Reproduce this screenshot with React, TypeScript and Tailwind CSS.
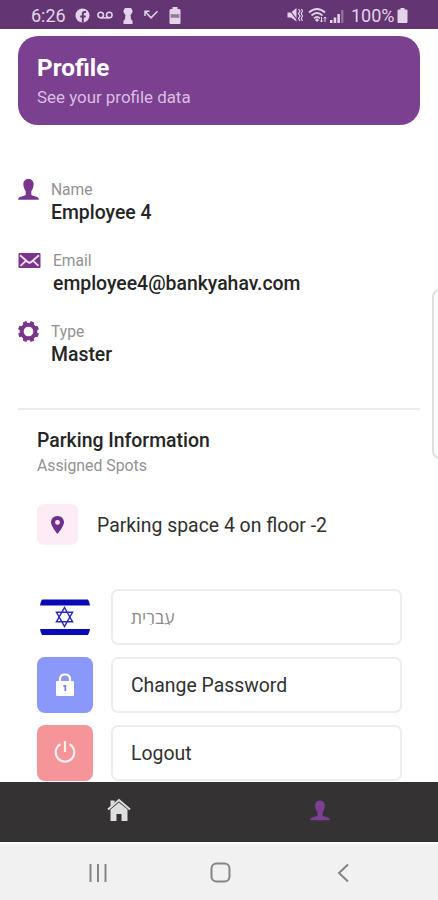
import type { ReactNode } from "react";

interface IconProps {
  className?: string;
}

function PersonIcon({ className }: IconProps) {
  return (
    <svg viewBox="0 0 20 20" className={className} fill="currentColor">
      <path d="M10 0C7 0 5.100 1.900 5.100 5C5.100 7.500 6.200 10 7.300 11.600V15C6.200 16.600 0.800 16.300 0.200 18.800V19.800H19.800V18.800C19.200 16.300 13.800 16.600 12.700 15V11.600C13.800 10 14.900 7.500 14.900 5C14.900 1.900 13 0 10 0Z" />
    </svg>
  );
}

function MailIcon({ className }: IconProps) {
  return (
    <svg viewBox="0 0 22 15" className={className}>
      <rect width="22" height="15" rx="1" fill="currentColor" />
      <path d="M1.500 2.300L9.300 9Q11 10.400 12.700 9L20.500 2.300M2 12.800L7.600 7.600M20 12.800L14.400 7.600" fill="none" stroke="#f3dff5" strokeWidth="1.800" />
    </svg>
  );
}

function GearIcon({ className }: IconProps) {
  return (
    <svg viewBox="0 0 20 20" className={className}>
      <circle cx="10" cy="10" r="6.500" fill="none" stroke="currentColor" strokeWidth="3.800" />
      {[22.5, 67.5, 112.5, 157.5, 202.5, 247.5, 292.5, 337.5].map((angle) => (
        <path key={angle} d="M7.700 3L8.300 0H11.700L12.300 3Z" fill="currentColor" transform={`rotate(${angle} 10 10)`} />
      ))}
    </svg>
  );
}

function StatusBar() {
  return (
    <div className="flex h-[29px] items-center bg-[#633573] pl-[31px] text-[#e3d3e8]">
      <span className="w-[44px] pt-[3px] text-[18px] leading-none">6:26</span>
      <svg className="mt-[2px] h-[15px] w-[15px]" viewBox="0 0 15 15">
        <circle cx="7.500" cy="7.500" r="7" fill="currentColor" />
        <path d="M7.800 14.500V6.200Q7.800 4 9.900 4H11M5.200 8.500H10.700" fill="none" stroke="#633573" strokeWidth="1.900" />
      </svg>
      <svg className="mt-px ml-[7px] h-[9px] w-4" viewBox="0 0 16 9" fill="none" stroke="currentColor" strokeWidth="1.500">
        <circle cx="3.700" cy="4" r="2.800" />
        <circle cx="12.300" cy="4" r="2.800" />
        <path d="M3.700 6.900H12.300" />
      </svg>
      <svg className="mt-[2px] ml-[10px] h-4 w-[10px]" viewBox="0 0 10 16" fill="currentColor">
        <path d="M2 0H8L9.500 2.500V4L8 6.500L7.500 7L8 11L9.500 13V16H0.500V13L2 11L2.500 7L2 6.500L0.500 4V2.500Z" />
      </svg>
      <svg className="mt-px ml-[11px] h-[10px] w-[15px]" viewBox="0 0 15 10" fill="none" stroke="currentColor" strokeWidth="1.500">
        <path d="M1 6V1.200H5.500M1.200 1.500L7 7.800L13.500 1.200" />
      </svg>
      <svg className="mt-[2px] ml-[10px] h-[17px] w-3" viewBox="0 0 12 17">
        <path d="M3.500 0H8.500V2H10.500L11.500 3V16Q11.500 17 10.500 17H1.500Q0.500 17 0.500 16V3L1.500 2H3.500Z" fill="currentColor" />
        <path d="M1.500 9H10.500" stroke="#a68ab0" strokeWidth="4" />
        <path d="M2.500 9H9.500" stroke="#8d6a99" strokeWidth="2" strokeDasharray="1.500 1" />
      </svg>
      <svg className="mt-px ml-[106px] h-4 w-4" viewBox="0 0 16 16">
        <path d="M0.500 5.500H4L9.500 1V14.500L4 10.500H0.500Z" fill="currentColor" />
        <path d="M1 1L11 14" stroke="#633573" strokeWidth="1.200" />
        <path d="M11.500 2L13 4L11.500 6.500L13 9L11.500 11.500L13 14M14.500 2L15.500 4L14.300 6.500L15.500 9L14.300 11.500L15.500 14" fill="none" stroke="currentColor" strokeWidth="1.200" />
      </svg>
      <svg className="mt-px ml-[5px] h-[15px] w-[19px]" viewBox="0 0 19 15" fill="none" stroke="currentColor" strokeWidth="1.700">
        <path d="M1 4.500Q9 -2.500 17 4.500M3.500 7.500Q9 2.500 14.500 7.500M6 10.300Q9 7.500 12 10.300" />
        <path d="M9 10L11 12L9 14L7 12Z" fill="currentColor" stroke="none" />
        <path d="M13.500 9V14M12 12.500L13.500 14L15 12.500M17 14V9M15.700 10.500L17 9L18.500 10.500" strokeWidth="1" />
      </svg>
      <svg className="mt-[2px] ml-[3px] h-[14px] w-[14px]" viewBox="0 0 14 14" fill="currentColor">
        <path d="M0 11H2.500V14H0ZM3.700 8.500H6.200V14H3.700ZM7.400 5H9.900V14H7.400Z" />
        <path d="M11 1H13.500V14H11Z" opacity="0.350" />
      </svg>
      <span className="ml-[7px] w-[45px] pt-[3px] text-[18px] leading-none whitespace-nowrap">100%</span>
      <svg className="mt-[2px] ml-px h-[15px] w-[11px]" viewBox="0 0 11 15" fill="currentColor">
        <path d="M3.500 0H7.500V1.500H9.500Q10.500 1.500 10.500 2.500V14Q10.500 15 9.500 15H1.500Q0.500 15 0.500 14V2.500Q0.500 1.500 1.500 1.500H3.500Z" />
      </svg>
    </div>
  );
}

interface FieldProps {
  icon: ReactNode;
  label: string;
  value: string;
}

function Field({ icon, label, value }: FieldProps) {
  return (
    <div className="flex h-[71px] text-[#79358c]">
      {icon}
      <div className="ml-[12px] pt-[2px]">
        <div className="text-[15.6px] leading-[20px] text-[#929292]">{label}</div>
        <div className="mt-px text-[19.4px] leading-[24px] font-medium text-[#252525]">{value}</div>
      </div>
    </div>
  );
}

interface ActionProps {
  icon: ReactNode;
  children: ReactNode;
}

function Action({ icon, children }: ActionProps) {
  return (
    <div className="flex h-14">
      {icon}
      <button className="ml-[18px] flex w-[291px] items-center rounded-[7px] border-2 border-[#ededed] pt-[2px] pl-[18px] text-[19.4px] text-[#303030]">
        {children}
      </button>
    </div>
  );
}

function FlagIcon() {
  return (
    <svg className="h-14 w-14" viewBox="0 0 56 56">
      <path d="M5 10.500H51Q52.500 12.500 53 16.500H3Q3.500 12.500 5 10.500ZM3 40H53Q52.500 43.500 51 46H5Q3.500 43.500 3 40Z" fill="#0a0ab4" />
      <path d="M27.500 18.500L35.500 32.700H19.500ZM27.500 37.500L19.500 23.300H35.500Z" fill="none" stroke="#2a2ab8" strokeWidth="1.500" />
    </svg>
  );
}

export default function App() {
  return (
    <div className="relative flex h-[900px] w-[438px] flex-col overflow-hidden bg-white font-['Roboto',sans-serif]">
      <StatusBar />
      <main className="h-[753px] shrink-0 overflow-hidden pt-[7px]">
        <header className="ml-[18px] h-[89px] w-[402px] rounded-[20px] bg-[#7c4090] pt-[16px] pl-[19px]">
          <h1 className="text-[24.3px] leading-[32px] font-bold text-white">Profile</h1>
          <p className="mt-[2px] text-[16.9px] leading-[22px] text-[#d9bfe0]">See your profile data</p>
        </header>

        <section className="mt-[53px] ml-[18px] h-[232px] w-[402px] border-b-2 border-[#ececec]">
          <Field icon={<PersonIcon className="mt-[1px] h-[21px] w-[21px]" />} label="Name" value="Employee 4" />
          <Field icon={<MailIcon className="mt-[4px] h-[15px] w-[23px]" />} label="Email" value="employee4@bankyahav.com" />
          <Field icon={<GearIcon className="mt-[1px] h-[21px] w-[21px]" />} label="Type" value="Master" />
        </section>

        <section className="pt-[19px] pl-[37px]">
          <h2 className="text-[19.4px] leading-[24px] font-medium text-[#252525]">Parking Information</h2>
          <p className="mt-[3px] text-[15.8px] leading-[20px] text-[#929292]">Assigned Spots</p>
          <div className="mt-[28px] flex h-[41px] items-center">
            <div className="flex h-[41px] w-[41px] items-center justify-center rounded-[7px] bg-[#fdecf5]">
              <svg className="h-[18px] w-[13px]" viewBox="0 0 13 18">
                <path d="M6.500 0C2.800 0 0 2.800 0 6.300C0 10.500 6.500 18 6.500 18S13 10.500 13 6.300C13 2.800 10.200 0 6.500 0ZM6.500 4A2.400 2.400 0 1 1 6.500 8.800A2.400 2.400 0 1 1 6.500 4Z" fill="#70308a" />
              </svg>
            </div>
            <span className="ml-[19px] pt-[2px] text-[19.4px] text-[#303030]">Parking space 4 on floor -2</span>
          </div>

          <div className="mt-[44px] flex flex-col gap-3">
            <Action icon={<FlagIcon />}>
              <span dir="rtl" className="-mt-[2px] font-['Open_Sans','Noto_Sans','DejaVu_Sans',sans-serif] text-[17.5px] text-[#8b8b8b]">עִברִית</span>
            </Action>
            <Action
              icon={
                <div className="flex h-14 w-14 items-center justify-center rounded-[8px] bg-[#8b98fb] pb-[2px]">
                  <svg className="h-[23px] w-[18px]" viewBox="0 0 18 23">
                    <path d="M4 9V6Q4 1.500 9 1.500T14 6V9" fill="none" stroke="#fff" strokeWidth="2.200" />
                    <rect y="8" width="18" height="15" rx="1" fill="#fff" />
                    <path d="M7.300 12.800H9.300V18" fill="none" stroke="#7480d8" strokeWidth="1.700" />
                  </svg>
                </div>
              }
            >
              Change Password
            </Action>
            <Action
              icon={
                <div className="flex h-14 w-14 items-center justify-center rounded-[8px] bg-[#f5959a] pb-[2px]">
                  <svg className="h-[22px] w-[22px]" viewBox="0 0 22 22" fill="none" stroke="#fff0ef" strokeWidth="2.200">
                    <path d="M6.500 3.200A9.300 9.300 0 1 0 15.500 3.200M11 0V11" />
                  </svg>
                </div>
              }
            >
              Logout
            </Action>
          </div>
        </section>
      </main>

      <nav className="flex h-[60px] shrink-0 bg-[#353234] pt-[17px]">
        <svg className="-mt-px ml-[107px] h-[24px] w-[24px]" viewBox="0 0 24 24">
          <path d="M3.500 11.500L12 4.500L20.500 11.500V23H14.500V16H9.500V23H3.500Z" fill="#dedede" />
          <path d="M1 11.500L12 2L23 11.500" fill="none" stroke="#dedede" strokeWidth="2" />
          <path d="M3.500 2.500H7.500V5L3.500 8.500Z" fill="#dedede" />
        </svg>
        <PersonIcon className="mt-px ml-[179px] h-[21px] w-[20px] text-[#7c3f94]" />
      </nav>
      <div className="flex h-[58px] shrink-0 items-center border-t-2 border-white bg-[#f1f1f1] pt-px text-[#858585]">
        <svg className="ml-[88px] h-5 w-5" viewBox="0 0 20 20" stroke="currentColor" strokeWidth="2">
          <path d="M2.500 1V19M10 1V19M17.500 1V19" />
        </svg>
        <svg className="ml-[102px] h-[21px] w-[21px]" viewBox="0 0 21 21" fill="none" stroke="currentColor" strokeWidth="2">
          <rect x="1.500" y="1.500" width="18" height="18" rx="5" />
        </svg>
        <svg className="ml-[106px] h-5 w-3" viewBox="0 0 12 20" fill="none" stroke="currentColor" strokeWidth="2">
          <path d="M11 1.500L2 10L11 18.500" />
        </svg>
      </div>

      {/* edge panel handle */}
      <div className="absolute top-[289px] -right-[10px] h-[170px] w-4 rounded-[8px] border-2 border-[#dedede] bg-white" />
    </div>
  );
}
